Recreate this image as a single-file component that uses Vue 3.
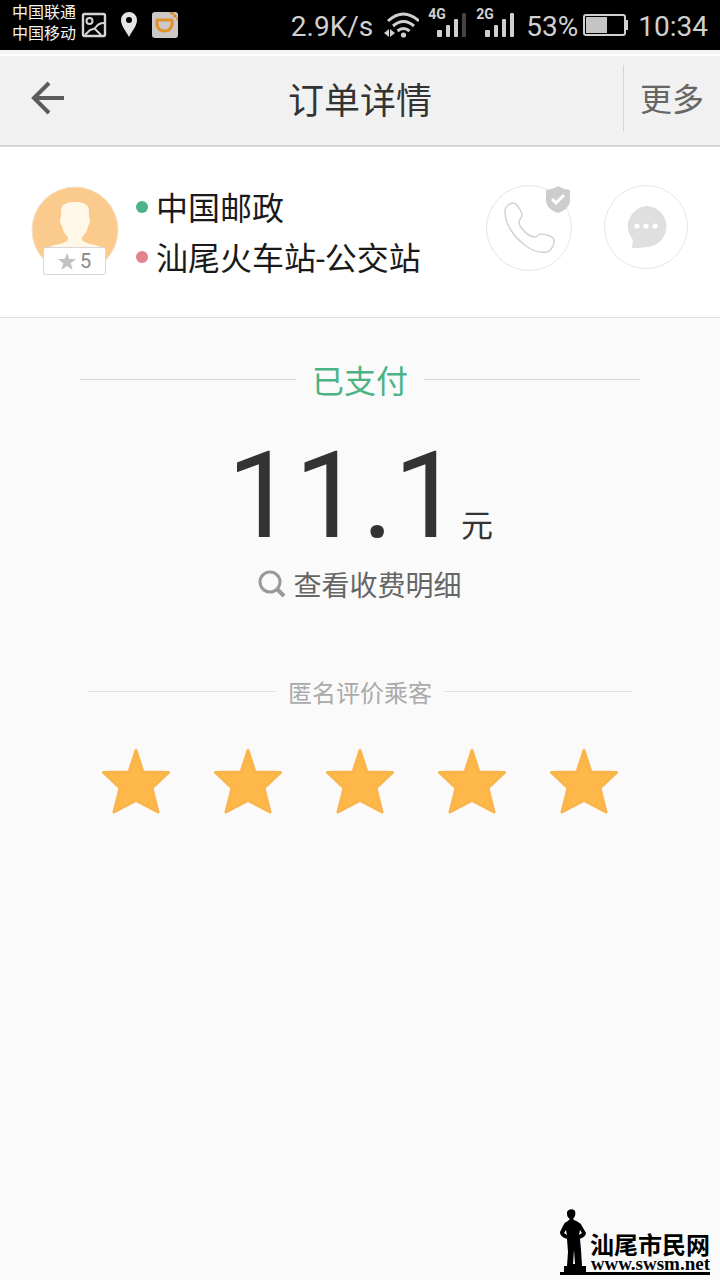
<script setup>
import { ref } from 'vue'

const rating = ref(5)
const trip = { from: '中国邮政', to: '汕尾火车站-公交站' }
</script>

<template>
  <div class="screen">
    <div class="status">
      <div class="carriers">
        <span>中国联通</span>
        <span>中国移动</span>
      </div>
      <div class="notices">
        <svg width="26" height="26" viewBox="0 0 26 26" fill="none" stroke="#d6d6d6" stroke-width="2.4">
          <rect x="2" y="2" width="22" height="22" rx="1.5" />
          <circle cx="8.5" cy="9" r="3" stroke-width="2" />
          <path d="M4 23l5-5M9 18c2-1 4 0 6-3 2-3 4-4 8-4M14 17l6 6" stroke-width="2" />
        </svg>
        <svg class="pin" width="18" height="26" viewBox="0 0 18 26">
          <path fill="#e4e4e4" fill-rule="evenodd" d="M9 0a8 8 0 0 0-8 8c0 6 5 11 8 17 3-6 8-11 8-17a8 8 0 0 0-8-8zm0 5a3 3 0 1 1 0 6 3 3 0 0 1 0-6z" />
        </svg>
        <svg width="28" height="28" viewBox="0 0 28 28">
          <rect x="1" y="1" width="26" height="26" rx="3" fill="#cbc9c5" />
          <path d="M6 9h15c1 7-2 11-7.500 11S5 16 6 9z" fill="none" stroke="#e0912c" stroke-width="3" stroke-linejoin="round" />
          <path d="M18 1l9 9V6l-5-5z" fill="#d98a2b" />
          <path d="M21 5l3-3M24 8l3-3" stroke="#e7d6bd" stroke-width="1" />
        </svg>
      </div>
      <span class="speed">2.9K/s</span>
      <svg class="wifi" width="36" height="28" viewBox="0 0 36 28">
        <g fill="none" stroke="#d0d0d0" stroke-width="3">
          <path d="M5 10q15.500-14 31 0" />
          <path d="M10 15q10.500-9 21 0" />
          <path d="M14.500 20q6-5 12 0" />
        </g>
        <circle cx="20.5" cy="24" r="2.600" fill="#d0d0d0" />
        <path d="M6 18v8l-5-4zM7 18v8l5-4z" fill="#d0d0d0" />
      </svg>
      <div class="signal">
        <span>4G</span>
        <svg width="30" height="26" viewBox="0 0 30 26" fill="#d0d0d0">
          <rect x="0" y="18" width="5" height="7" rx="1" /><rect x="9" y="13" width="4" height="12" rx="1" />
          <rect x="17" y="7" width="4" height="18" rx="1" /><rect x="25" y="1" width="4" height="24" rx="1" fill="#444" />
        </svg>
      </div>
      <div class="signal">
        <span>2G</span>
        <svg width="30" height="26" viewBox="0 0 30 26" fill="#d0d0d0">
          <rect x="0" y="18" width="5" height="7" rx="1" /><rect x="9" y="13" width="4" height="12" rx="1" />
          <rect x="17" y="7" width="4" height="18" rx="1" /><rect x="25" y="1" width="4" height="24" rx="1" />
        </svg>
      </div>
      <span class="percent">53%</span>
      <svg class="battery" width="46" height="24" viewBox="0 0 46 24">
        <rect x="2" y="2" width="41" height="20" rx="2" fill="none" stroke="#d0d0d0" stroke-width="2" />
        <rect x="4" y="4" width="21" height="16" fill="#c4c4c4" />
        <rect x="43" y="7" width="3" height="10" fill="#d0d0d0" />
      </svg>
      <time>10:34</time>
    </div>

    <header class="bar">
      <button class="back" type="button" aria-label="返回">
        <svg width="34" height="34" viewBox="0 0 34 34" fill="none" stroke="#5c5c5c" stroke-width="4">
          <path d="M18 2L3 17l15 15M3 17h30" />
        </svg>
      </button>
      <h1>订单详情</h1>
      <button class="more" type="button">更多</button>
    </header>

    <section class="trip">
      <div class="passenger">
        <svg width="88" height="88" viewBox="0 0 88 88">
          <circle cx="44" cy="44" r="43" fill="#fbca8d" stroke="#f3e3cd" />
          <path fill="#fff8e8" d="M30 25c0-7 6-9 14-9s14 2 14 9v6c2 2 1 7-1 9-1 6-3 8-6 11v3c3 4 13 4 19 7v18H18V61c6-3 16-3 19-7v-3c-3-3-5-5-6-11-2-2-3-7-1-9z" />
        </svg>
        <span class="score">
          <svg width="18" height="17" viewBox="0 0 18 17"><path fill="#c2c2c2" d="M9 0l2.400 6H18l-5.200 4.200L14.600 17 9 13l-5.600 4 1.800-6.800L0 6h6.600z" /></svg>
          5
        </span>
      </div>
      <div class="route">
        <p class="from">{{ trip.from }}</p>
        <p class="to">{{ trip.to }}</p>
      </div>
      <button class="contact call" type="button" aria-label="拨打电话">
        <svg width="52" height="52" viewBox="0 0 52 52" fill="#fff" stroke="#d2d2d2" stroke-width="1.500" stroke-linejoin="round">
          <path d="M2 8C3 4 7 1 10 1c4 0 7 6 9 11 1 3-3 5-3 8 0 5 9 15 16 15 3 0 3-3 6-3 4 0 12 2 13 6s-3 11-7 12c-6 1-14-1-21-6C12 36 1 22 2 8z" />
        </svg>
        <svg class="shield" width="26" height="28" viewBox="0 0 26 28">
          <path fill="#cdcdcd" d="M13 0c3 2 7 3 12 4v10c0 6-5 11-12 13C6 25 1 20 1 14V4c5-1 9-2 12-4z" />
          <path d="M7 13l4 4 8-8" fill="none" stroke="#fff" stroke-width="3" />
        </svg>
      </button>
      <button class="contact chat" type="button" aria-label="发送消息">
        <svg width="42" height="44" viewBox="0 0 42 44">
          <path fill="#dfdfdf" d="M21 1a20 20 0 0 1 0 41c-4 1-9 1-14 1l1-8A20.500 20.500 0 0 1 21 1z" />
          <g fill="#fff"><circle cx="12" cy="21" r="2.600" /><circle cx="21" cy="21" r="2.600" /><circle cx="30" cy="21" r="2.600" /></g>
        </svg>
      </button>
    </section>

    <main>
      <h2 class="rule paid">已支付</h2>
      <p class="amount">11.1<small>元</small></p>
      <a class="detail" href="#detail">
        <svg width="28" height="28" viewBox="0 0 28 28" fill="none" stroke="#999">
          <circle cx="12" cy="12" r="10" stroke-width="3" /><path d="M19 19l7 7" stroke-width="4" />
        </svg>
        查看收费明细
      </a>
      <h2 class="rule review">匿名评价乘客</h2>
      <div class="stars">
        <button v-for="n in 5" :key="n" type="button" :aria-label="n + '星'" :aria-pressed="n <= rating" @click="rating = n">
          <svg width="68" height="66" viewBox="0 0 68 66">
            <path :fill="n <= rating ? '#fdb849' : '#ddd'" :stroke="n <= rating ? '#f9b54a' : '#ccc'" stroke-width="3" stroke-linejoin="round" d="M34 2.500L41 24L66.500 24.500L50 40L56 64L34 52.500L12 64L18 40L1.500 24.500L27 24z" />
          </svg>
        </button>
      </div>
    </main>

    <footer>
      <svg width="28" height="64" viewBox="0 0 28 64">
        <path d="M7 4c1-3 6-4 8-1 1 3 0 6-2 8l1 1c4 2 7 3 8 6l4 7c0 3-4 5-6 6l1 11 1 16h4v6H4v-6h3L8 44l-1-13c-3-1-7-3-7-7l4-8c1-2 3-2 5-4l1-1C7 9 7 7 7 4z" />
        <path fill="#fafafa" d="M6 22l-2 3 3 2zM20 22l2 3-3 2zM14 42l1 14h-2z" />
      </svg>
      <div class="brand">
        <strong>汕尾市民网</strong>
        <span>www.swsm.net</span>
      </div>
    </footer>
  </div>
</template>

<style>
body { margin: 0; }
</style>

<style scoped>
* { box-sizing: border-box; }
.screen {
  min-height: 100vh;
  display: flex;
  flex-direction: column;
  background: #fafafa;
  color: #222;
  font-family: Roboto, "Noto Sans CJK SC", sans-serif;
}
h1, h2, p { margin: 0; font-weight: 400; }
svg { display: block; flex: none; }
button { padding: 0; border: 0; background: none; font: inherit; color: inherit; cursor: pointer; }

.status {
  height: 50px;
  padding: 0 12px;
  display: flex;
  align-items: center;
  background: #000;
  color: #d0d0d0;
  font-size: 28px;
  line-height: 32px;
}
.carriers { display: flex; flex-direction: column; margin-bottom: 4px; color: #f4f4f4; font-size: 16px; line-height: 21px; }
.notices { display: flex; align-items: center; gap: 13px; margin-left: 5px; }
.speed { margin-left: auto; padding-top: 3px; }
.wifi { margin-left: 10px; }
.signal { display: flex; align-items: center; margin-left: 9px; }
.signal span { width: 9px; margin-bottom: 22px; font-size: 14px; line-height: 14px; font-weight: 700; white-space: nowrap; }
.percent { margin-left: 11px; padding-top: 3px; }
.battery { margin-left: 4px; }
time { margin-left: 10px; padding-top: 3px; }

.bar {
  height: 97px;
  padding-top: 4px;
  display: grid;
  grid-template-columns: 97px 1fr 97px;
  align-items: center;
  background: #f1f1f1;
  border-top: 4px solid #f4f4f4;
  border-bottom: 2px solid #d6d6d6;
  box-shadow: inset 0 2px #fff;
}
.back { height: 64px; padding: 0 0 8px 31px; }
.bar h1 { text-align: center; font-size: 36px; line-height: 48px; color: #333; }
.more { height: 66px; margin-bottom: 8px; padding-top: 5px; border-left: 1px solid #d4d4d4; font-size: 32px; line-height: 48px; color: #666; }

.trip {
  height: 171px;
  padding: 0 32px 0 31px;
  display: flex;
  align-items: center;
  background: #fff;
  border-bottom: 1px solid #e2e2e2;
}
.passenger { position: relative; width: 88px; margin-bottom: 4px; }
.score {
  position: absolute;
  left: 12px;
  bottom: -1px;
  width: 63px;
  height: 28px;
  display: flex;
  align-items: center;
  justify-content: center;
  gap: 4px;
  background: #fff;
  border: 1px solid #d8d8d8;
  border-radius: 2px;
  font-size: 20px;
  color: #888;
}
.route { flex: 1; margin-left: 17px; padding-top: 4px; font-size: 32px; line-height: 50px; color: #1a1a1a; }
.route p { display: flex; align-items: center; gap: 8px; white-space: nowrap; }
.route p::before { content: ""; width: 12px; height: 12px; margin-bottom: 4px; border-radius: 50%; }
.from::before { background: #4bb388; }
.to::before { background: #e2838c; }
.contact {
  position: relative;
  display: flex;
  align-items: center;
  justify-content: center;
  border: 1px solid #e6e6e6;
  border-radius: 50%;
}
.call { width: 86px; height: 86px; margin-right: 32px; margin-bottom: 8px; }
.chat { width: 84px; height: 84px; margin-bottom: 10px; }
.shield { position: absolute; top: 0; right: 0; }

main { padding: 40px 80px 0; display: flex; flex-direction: column; align-items: center; }
.rule { width: 100%; display: flex; align-items: center; }
.rule::before, .rule::after { content: ""; flex: 1; height: 1px; background: #d8d8d8; margin-bottom: 5px; }
.review::before, .review::after { background: #e2e2e2; }
.paid { gap: 16px; font-size: 32px; line-height: 48px; color: #4cb385; }
.amount { margin-top: 20px; font-size: 120px; line-height: 140px; color: #333; white-space: nowrap; }
.amount small { font-size: 32px; line-height: 40px; }
.detail { display: flex; align-items: center; gap: 7px; font-size: 28px; line-height: 42px; color: #666; text-decoration: none; }
.detail svg { margin-bottom: 6px; }
.review { gap: 12px; margin-top: 68px; padding: 0 8px; font-size: 24px; line-height: 36px; color: #aaa; }
.stars { display: flex; gap: 44px; margin-top: 36px; }

footer { margin: auto 10px 5px auto; display: flex; align-items: flex-end; border-bottom: 3px solid #000; color: #000; }
.brand { margin-left: 2px; display: flex; flex-direction: column; align-items: flex-end; }
.brand strong { font-size: 24px; line-height: 20px; }
.brand span { font-family: "Liberation Serif", serif; font-weight: 700; font-size: 19px; line-height: 16px; }
</style>
